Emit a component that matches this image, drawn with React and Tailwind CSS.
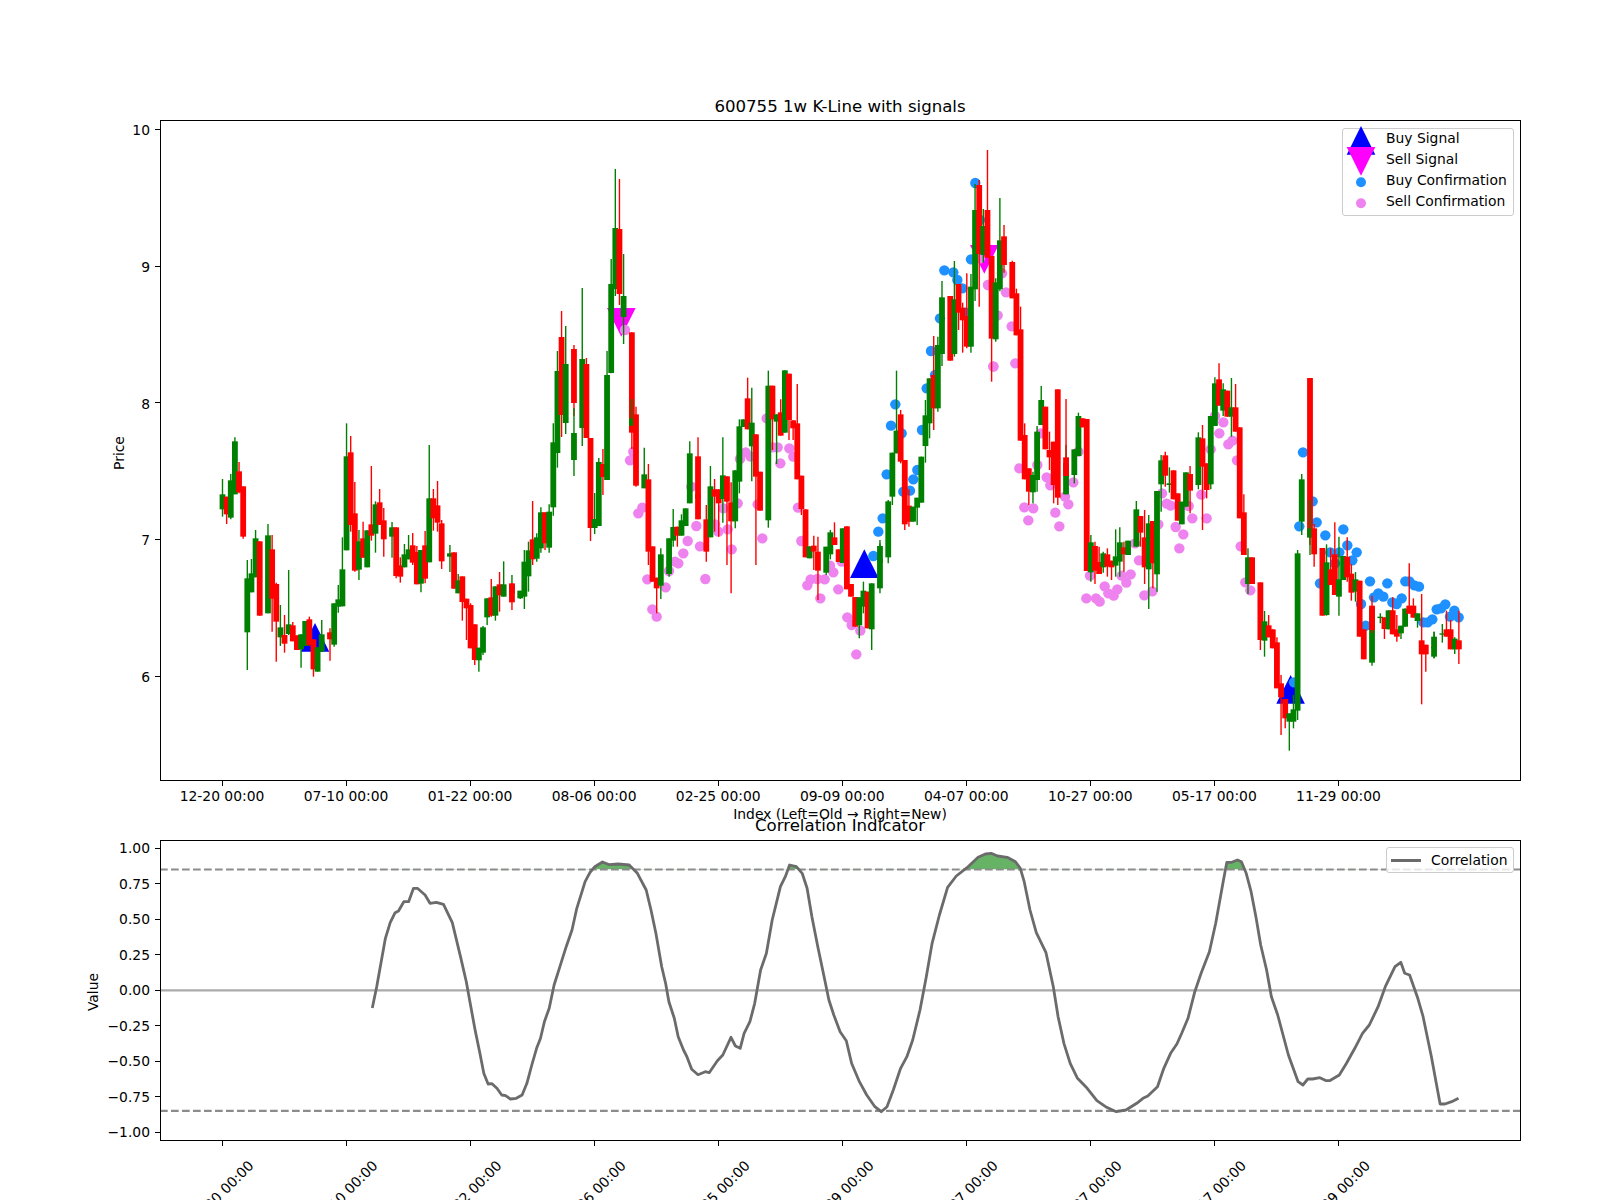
const X0 = 222.5
const STEP = 4.135
const snap = (x) => X0 + STEP * Math.round((x - X0) / STEP)

// candles read off the chart: [x, colour, bodyTop, bodyBottom, wickTop, wickBottom]
const readBlock = (ox, oy, sx, rows) =>
    rows.map(([x, c, t, b, wt, wb]) => [snap(ox + x / sx), c, oy + t / 3, oy + b / 3, oy + wt / 3, oy + wb / 3])

const CANDLES = [
    ...readBlock(200, 400, 3, [
        [65, 'g', 283, 328, 237, 350], [78, 'r', 290, 343, 290, 372], [92, 'g', 241, 353, 222, 358], [105, 'g', 124, 283, 112, 283],
        [120, 'r', 214, 277, 186, 280], [132, 'r', 259, 410, 259, 416], [144, 'g', 535, 697, 480, 810], [158, 'g', 520, 577, 477, 577],
        [171, 'g', 415, 532, 390, 532], [184, 'r', 424, 647, 424, 647], [198, 'g', 406, 640, 372, 640], [213, 'r', 448, 596, 405, 695],
        [225, 'r', 552, 665, 548, 785], [237, 'g', 682, 712, 615, 738], [252, 'r', 705, 731, 645, 758], [265, 'g', 673, 702, 510, 705],
        [278, 'r', 676, 724, 666, 724], [291, 'r', 706, 750, 706, 750], [306, 'g', 703, 748, 703, 803], [318, 'g', 663, 738, 663, 738],
        [330, 'r', 658, 735, 650, 738], [345, 'r', 718, 808, 718, 830], [357, 'g', 742, 815, 742, 815], [370, 'g', 703, 755, 660, 755],
        [384, 'r', 697, 718, 685, 782], [398, 'g', 610, 734, 610, 740], [410, 'g', 598, 620, 555, 638], [423, 'g', 508, 619, 412, 619],
        [438, 'g', 169, 451, 70, 451], [451, 'r', 157, 375, 108, 395], [465, 'r', 340, 512, 246, 515], [477, 'g', 424, 509, 390, 540],
        [490, 'r', 415, 473, 365, 473], [503, 'g', 391, 502, 391, 502], [516, 'r', 373, 407, 198, 422], [530, 'g', 313, 401, 304, 458],
        [542, 'r', 307, 375, 267, 375], [557, 'r', 361, 418, 324, 470], [570, 'g', 382, 410, 366, 473], [584, 'r', 382, 528, 382, 535],
        [597, 'r', 496, 530, 472, 548], [612, 'g', 463, 502, 432, 502], [622, 'g', 448, 478, 405, 478], [636, 'r', 436, 488, 399, 495],
        [650, 'r', 456, 553, 438, 553], [663, 'g', 450, 551, 450, 577], [677, 'r', 436, 536, 393, 550], [690, 'g', 295, 487, 135, 487],
        [704, 'r', 295, 355, 267, 392], [718, 'r', 316, 368, 243, 395], [730, 'r', 370, 484, 360, 507], [745, 'g', 460, 470, 435, 516],
        [756, 'r', 457, 566, 457, 566], [769, 'g', 541, 580, 522, 580], [782, 'r', 529, 606, 529, 662], [798, 'r', 596, 625, 596, 720],
        [808, 'r', 615, 745, 610, 745], [822, 'r', 673, 780, 673, 795], [837, 'g', 743, 781, 743, 815], [850, 'g', 682, 758, 678, 765],
        [863, 'g', 595, 652, 595, 675], [876, 'r', 592, 647, 537, 650], [890, 'g', 559, 647, 559, 662], [902, 'r', 553, 586, 516, 635],
        [916, 'g', 553, 590, 484, 590], [930, 'g', 553, 581, 525, 581], [942, 'r', 550, 607, 550, 630], [956, 'g', 572, 595, 572, 597],
        [970, 'g', 485, 590, 450, 627], [984, 'g', 451, 529, 425, 575], [995, 'r', 418, 478, 303, 495], [1008, 'g', 412, 476, 400, 485],
        [1022, 'g', 337, 445, 322, 458], [1034, 'r', 337, 430, 337, 450], [1050, 'g', 335, 443, 313, 458], [1063, 'g', 127, 322, 70, 347],
    ]),
    ...readBlock(0, 0, 1, [
        [558.7, 'g', 1113, 1359, 1053, 1403], [562.7, 'r', 1011, 1245, 933, 1311], [566.7, 'g', 1092, 1269, 978, 1302],
        [572, 'r', 1047, 1209, 1035, 1248], [576, 'g', 1299, 1380, 1224, 1428], [581, 'g', 1077, 1284, 864, 1338],
        [585, 'r', 1092, 1314, 1074, 1314], [589.8, 'r', 1314, 1584, 1314, 1623], [594.6, 'g', 1557, 1584, 1479, 1602],
        [598, 'g', 1386, 1578, 1374, 1578], [601.7, 'r', 1392, 1431, 1347, 1485], [606.7, 'g', 1125, 1440, 1053, 1440],
        [611.7, 'g', 852, 1119, 777, 1120], [615.7, 'g', 684, 867, 507, 888], [621, 'r', 687, 882, 537, 915], [625.3, 'g', 888, 951, 762, 1032],
    ]),
    ...readBlock(600, 280, 3, [
        [90, 'r', 157, 458, 157, 507], [100, 'g', 415, 437, 358, 437], [114, 'r', 403, 617, 380, 620], [128, 'g', 583, 625, 503, 625],
        [141, 'r', 598, 815, 552, 855], [155, 'r', 799, 905, 799, 905], [167, 'r', 893, 925, 893, 1000], [182, 'g', 823, 917, 805, 957],
        [207, 'g', 775, 882, 775, 890], [221, 'g', 741, 782, 687, 800], [233, 'r', 740, 767, 740, 800], [248, 'g', 721, 767, 703, 767],
        [260, 'g', 685, 738, 685, 738], [275, 'g', 520, 670, 484, 670], [288, 'r', 529, 655, 472, 655], [300, 'r', 643, 718, 643, 718],
        [314, 'r', 718, 815, 675, 845], [326, 'g', 619, 772, 558, 772], [341, 'r', 628, 650, 597, 755], [353, 'r', 628, 670, 628, 770],
        [367, 'g', 586, 657, 472, 728], [380, 'r', 589, 665, 589, 855], [393, 'r', 667, 724, 607, 940], [407, 'g', 571, 724, 571, 745],
        [420, 'g', 439, 605, 418, 640], [432, 'g', 418, 441, 418, 441], [445, 'r', 355, 448, 293, 448], [461, 'g', 428, 499, 323, 604],
        [473, 'r', 463, 590, 463, 855], [485, 'r', 575, 692, 575, 692], [500, 'g', 317, 721, 272, 743], [513, 'r', 317, 418, 317, 510],
        [526, 'g', 403, 425, 403, 552], [539, 'r', 397, 467, 358, 467], [555, 'g', 271, 458, 271, 458], [567, 'r', 281, 420, 281, 480],
        [580, 'r', 421, 445, 421, 480], [594, 'r', 430, 598, 312, 598], [606, 'r', 587, 687, 587, 705], [620, 'r', 688, 832, 688, 832],
        [632, 'g', 799, 835, 799, 835], [647, 'r', 797, 815, 767, 870], [660, 'r', 815, 872, 770, 960], [673, 'g', 800, 878, 800, 885],
        [686, 'g', 757, 823, 750, 838], [699, 'r', 772, 795, 727, 795], [712, 'r', 808, 846, 808, 846], [724, 'g', 745, 849, 745, 849],
        [741, 'r', 739, 928, 739, 928], [753, 'r', 912, 950, 912, 950], [767, 'r', 951, 1040, 951, 1040], [780, 'g', 952, 1036, 952, 1075],
        [792, 'g', 932, 980, 905, 1000], [805, 'r', 935, 1045, 935, 1045], [818, 'g', 910, 1048, 910, 1110], [834, 'g', 835, 925, 790, 940],
        [846, 'g', 798, 848, 780, 848], [860, 'g', 664, 832, 660, 850], [873, 'g', 518, 650, 518, 675], [884, 'g', 452, 520, 272, 520],
        [899, 'r', 403, 545, 390, 550], [913, 'r', 540, 733, 540, 750], [927, 'r', 677, 725, 628, 740], [938, 'g', 680, 725, 680, 725],
        [954, 'g', 653, 683, 653, 735], [966, 'g', 530, 668, 530, 668], [978, 'g', 406, 498, 360, 548], [993, 'g', 295, 430, 295, 475],
        [1004, 'r', 285, 385, 168, 450],
    ]),
    ...readBlock(900, 130, 3, [
        [119, 'g', 645, 835, 620, 845], [130, 'g', 502, 672, 453, 708], [145, 'r', 498, 692, 498, 692], [158, 'g', 508, 672, 393, 680],
        [170, 'r', 462, 548, 462, 600], [185, 'r', 533, 571, 518, 668], [197, 'r', 558, 650, 430, 655], [212, 'g', 470, 650, 432, 668],
        [225, 'g', 240, 478, 162, 513], [238, 'r', 165, 372, 150, 530], [250, 'g', 288, 375, 237, 398], [264, 'r', 240, 383, 60, 383],
        [278, 'r', 378, 626, 378, 755], [290, 'g', 457, 628, 445, 635], [305, 'g', 331, 478, 204, 484], [318, 'r', 319, 405, 285, 428],
        [333, 'r', 396, 505, 392, 505], [344, 'r', 490, 616, 476, 616], [357, 'r', 598, 932, 530, 932],
    ]),
    ...readBlock(1000, 130, 2.904, [
        [70, 'r', 915, 1048, 880, 1048], [80, 'r', 1015, 1085, 1015, 1125], [97, 'g', 1035, 1087, 1025, 1120], [107, 'g', 905, 1050, 888, 1085],
        [122, 'g', 810, 885, 768, 885], [133, 'r', 830, 958, 830, 958], [147, 'r', 960, 982, 905, 1020], [158, 'r', 935, 1065, 935, 1120],
        [171, 'r', 778, 1103, 778, 1125], [186, 'g', 1000, 1093, 945, 1093], [197, 'r', 982, 1038, 807, 1038], [212, 'g', 958, 1035, 958, 1060],
        [223, 'g', 858, 978, 848, 978], [238, 'r', 865, 892, 865, 892],
    ]),
    ...readBlock(1000, 400, 3, [
        [258, 'r', 57, 513, 57, 513], [270, 'g', 427, 517, 405, 545], [285, 'r', 438, 512, 425, 552], [298, 'r', 486, 522, 440, 522],
        [310, 'g', 460, 502, 455, 518], [324, 'r', 463, 500, 445, 530], [337, 'r', 482, 502, 482, 540], [350, 'g', 469, 497, 388, 530],
        [361, 'g', 427, 485, 382, 530], [377, 'r', 442, 463, 425, 515], [390, 'g', 422, 465, 422, 465], [404, 'g', 328, 440, 303, 440],
        [417, 'r', 348, 398, 348, 440], [430, 'r', 412, 502, 330, 552], [444, 'g', 370, 508, 345, 627], [456, 'r', 363, 490, 363, 565],
        [471, 'g', 273, 523, 273, 575], [481, 'g', 181, 253, 165, 335], [498, 'r', 166, 227, 155, 260], [511, 'g', 250, 255, 202, 278],
        [524, 'r', 211, 298, 211, 298], [537, 'r', 280, 362, 280, 362], [548, 'g', 305, 373, 305, 373], [564, 'g', 217, 320, 217, 320],
        [575, 'r', 222, 272, 198, 340],
    ]),
    ...readBlock(1000, 130, 2.904, [
        [573, 'g', 922, 1065, 907, 1078], [585, 'r', 925, 1010, 885, 1200], [597, 'r', 1000, 1080, 1000, 1105], [610, 'g', 858, 1063, 858, 1078],
        [621, 'g', 760, 888, 742, 888], [636, 'r', 748, 827, 700, 827], [648, 'g', 778, 842, 760, 858], [662, 'r', 782, 860, 782, 860],
        [675, 'g', 832, 860, 744, 920], [689, 'r', 832, 905, 762, 905], [700, 'r', 892, 1165, 892, 1165],
    ]),
    ...readBlock(1000, 400, 3, [
        [733, 'r', 337, 465, 283, 465], [748, 'g', 472, 552, 445, 582], [762, 'r', 472, 552, 472, 552], [777, 'r', 547, 720, 547, 750],
        [790, 'g', 664, 722, 633, 770], [804, 'r', 676, 712, 645, 712], [815, 'r', 688, 745, 688, 745], [827, 'r', 727, 865, 712, 865],
        [843, 'r', 850, 892, 825, 1005], [854, 'r', 897, 955, 897, 985], [871, 'g', 940, 965, 940, 1052], [884, 'g', 928, 965, 885, 985],
        [897, 'g', 460, 932, 450, 960], [908, 'g', 238, 365, 222, 405], [924, 'r', -66, 410, -66, 435], [934, 'g', 385, 413, 300, 465],
        [948, 'r', 385, 463, 372, 500], [962, 'r', 444, 647, 444, 647], [975, 'g', 487, 645, 433, 647], [988, 'r', 508, 555, 445, 555],
        [1001, 'r', 463, 585, 367, 585], [1017, 'g', 538, 590, 410, 647], [1028, 'g', 468, 540, 468, 540], [1041, 'r', 470, 532, 412, 545],
        [1056, 'r', 521, 578, 492, 602], [1068, 'g', 538, 575, 516, 605], [1082, 'r', 542, 710, 542, 710], [1095, 'r', 688, 778, 688, 778],
        [1110, 'g', 625, 788, 625, 797], [1122, 'r', 617, 690, 587, 698], [1135, 'g', 650, 654, 640, 670], [1148, 'r', 652, 687, 652, 717],
        [1160, 'g', 631, 688, 631, 688], [1175, 'r', 631, 703, 592, 703], [1188, 'r', 688, 710, 645, 725], [1203, 'g', 677, 700, 677, 717],
        [1214, 'g', 626, 680, 625, 680], [1228, 'r', 617, 641, 490, 641], [1243, 'r', 617, 653, 595, 653], [1255, 'g', 640, 663, 640, 683],
        [1270, 'r', 721, 763, 582, 913], [1283, 'r', 734, 763, 734, 815], [1296, 'g', 740, 770, 695, 775], [1308, 'g', 710, 745, 695, 775],
        [1321, 'g', 700, 704, 672, 728], [1335, 'r', 688, 710, 632, 710], [1348, 'r', 688, 748, 660, 748], [1362, 'g', 716, 748, 712, 762],
        [1375, 'r', 721, 748, 632, 792],
    ]),
]

const readDots = (ox, oy, sx, pts) => pts.map(([x, y]) => [ox + x / sx, oy + y / 3])

const SELL_DOTS = [
    ...readDots(600, 280, 3, [
        [75, 150], [100, 515], [90, 541], [127, 683], [115, 700], [263, 783], [289, 738], [300, 799], [250, 820], [225, 845], [235, 850], [207, 873],
        [142, 898], [197, 922], [157, 988], [170, 1010], [316, 897], [345, 733], [355, 755], [383, 748], [395, 808], [370, 685], [413, 670], [274, 620],
        [420, 537], [437, 517], [452, 530], [473, 673], [487, 775], [500, 415], [518, 502], [533, 502], [541, 550], [568, 505], [580, 530], [594, 683],
        [604, 783], [690, 857], [700, 877], [632, 898], [622, 916], [652, 897], [674, 898], [661, 955], [715, 928], [725, 845], [742, 1012], [755, 1035],
        [781, 1052], [769, 1123], [1165, 15], [1180, 260],
    ]),
    ...readDots(900, 130, 3, [[264, 465], [318, 487], [306, 430], [293, 556], [335, 589], [280, 709], [346, 700], [240, 385]]),
    ...readDots(1000, 400, 3, [
        [58, 205], [112, 195], [122, 100], [140, 232], [151, 256], [73, 322], [100, 325], [85, 361], [166, 338], [178, 379], [195, 290], [205, 313],
        [220, 247], [235, 155], [270, 527], [259, 595], [288, 595], [299, 605], [314, 559], [325, 580], [341, 587], [352, 568], [379, 548], [365, 527],
        [392, 523], [405, 430], [417, 481], [433, 586], [457, 574], [475, 373], [486, 280], [500, 311], [512, 317], [527, 381], [550, 403], [538, 445],
        [577, 355], [620, 355], [604, 284], [566, 318], [632, 148], [645, 48], [670, 67], [658, 100], [685, 133], [697, 122], [711, 181], [722, 439],
        [736, 547], [751, 571],
    ]),
]

const BUY_DOTS = [
    ...readDots(600, 280, 3, [
        [820, 828], [835, 755], [848, 715], [860, 583], [873, 437], [886, 373], [905, 460], [910, 635], [930, 632], [940, 598], [952, 570], [966, 450],
        [980, 325], [1005, 285], [993, 213], [1020, 115],
    ]),
    ...readDots(900, 130, 3, [[133, 421], [160, 427], [172, 450], [187, 475], [197, 548], [213, 388], [226, 159], [240, 270]]),
    ...readDots(1000, 400, 3, [
        [882, 847], [909, 157], [938, 304], [898, 379], [950, 367], [976, 406], [1030, 388], [1042, 436], [1070, 457], [991, 457], [1018, 457], [1005, 490],
        [1057, 481], [960, 550], [1110, 544], [1162, 550], [1216, 544], [1228, 544], [1243, 556], [1257, 560], [1135, 580], [1122, 592], [1150, 590],
        [1177, 607], [1190, 612], [1205, 595], [1083, 612], [1097, 677], [1270, 667], [1283, 667], [1297, 658], [1310, 628], [1323, 625], [1336, 613],
        [1350, 650], [1363, 632], [1376, 652],
    ]),
]

const BUY_SIGNALS = [[315, 623], [864.3, 549.3], [1290.6, 675]]
const SELL_SIGNALS = [[621.3, 308], [984.3, 245]]

const corrLeft = [
    [603, 714], [612, 650], [622, 570], [630, 505], [640, 458], [650, 428], [657, 423], [668, 395], [678, 395], [688, 355], [696, 355], [712, 375], [722, 400],
    [735, 397], [750, 403], [768, 458], [785, 560], [797, 635], [805, 700], [815, 780], [825, 850], [833, 910], [842, 942], [850, 941], [860, 955], [870, 975],
    [878, 977], [888, 987], [900, 985], [912, 975], [922, 940], [932, 885], [942, 835], [950, 805], [958, 755], [968, 715], [978, 645], [990, 590], [1003, 530],
    [1015, 480], [1025, 415], [1042, 335], [1052, 308], [1062, 290], [1078, 276], [1092, 284], [1110, 282], [1133, 285], [1150, 310], [1168, 360], [1178, 420],
    [1188, 490], [1200, 590], [1208, 640], [1215, 695], [1226, 745], [1234, 800], [1245, 840], [1252, 860], [1262, 898], [1275, 914], [1290, 905], [1298, 908],
    [1315, 872], [1326, 855], [1343, 802], [1352, 828], [1362, 835], [1370, 790], [1382, 755], [1392, 700], [1404, 600], [1416, 550], [1428, 450], [1445, 350],
    [1455, 320], [1464, 285], [1478, 290], [1490, 310], [1500, 355], [1510, 440], [1522, 530], [1535, 620], [1545, 690], [1555, 735], [1568, 785],
]

const corrRight = [
    [13, 812], [24, 880], [40, 935], [55, 975], [72, 1010], [85, 1025], [97, 1010], [110, 960], [125, 895], [138, 860], [150, 810], [165, 720], [178, 620],
    [190, 520], [205, 435], [222, 352], [240, 318], [262, 293], [285, 262], [300, 252], [312, 250], [325, 258], [345, 262], [362, 275], [372, 295], [380, 335],
    [392, 420], [405, 488], [425, 548], [440, 650], [450, 740], [462, 820], [475, 880], [490, 925], [510, 955], [530, 992], [550, 1012], [570, 1025], [590, 1020],
    [612, 1000], [625, 985], [635, 978], [655, 950], [668, 895], [682, 850], [695, 822], [705, 790], [718, 745], [732, 665], [745, 610], [762, 545], [775, 460],
    [790, 340], [798, 277], [808, 277], [820, 270], [828, 275], [838, 310], [848, 365], [858, 440], [868, 525], [880, 600], [890, 680], [903, 735], [925, 855],
    [945, 935], [955, 945], [965, 927], [975, 927], [990, 923], [1003, 932], [1010, 932], [1030, 915], [1045, 880], [1062, 835], [1078, 790], [1092, 765],
    [1110, 710], [1125, 650], [1145, 590], [1157, 577], [1165, 610], [1175, 615], [1192, 685], [1203, 740], [1220, 860], [1238, 1002], [1248, 1002], [1262, 995],
    [1276, 985],
]

const CORR_POINTS = [
    ...corrLeft.map(([x, y]) => [80 + x / 2.063, 770 + y / 3]),
    ...corrRight.map(([x, y]) => [840 + x / 2.063, 770 + y / 3]),
]
const corrLine = CORR_POINTS.map(([x, y]) => `${x.toFixed(1)},${y.toFixed(1)}`).join(' ')
const corrFill = `${CORR_POINTS[0][0].toFixed(1)},869.5 ${corrLine} ${CORR_POINTS[CORR_POINTS.length - 1][0].toFixed(1)},869.5`

const TICK_LABELS = ['12-20 00:00', '07-10 00:00', '01-22 00:00', '08-06 00:00', '02-25 00:00', '09-09 00:00', '04-07 00:00', '10-27 00:00', '05-17 00:00', '11-29 00:00']
const tickX = (i) => X0 + i * 30 * STEP

const PRICE_TICKS = [[10, 129.3], [9, 266], [8, 402.7], [7, 539.4], [6, 676.1]]
const CORR_TICKS = ['1.00', '0.75', '0.50', '0.25', '0.00', '−0.25', '−0.50', '−0.75', '−1.00']

function YTick({ y, label, shift = 5 }) {
    return (
        <g>
            <line x1="155" x2="160" y1={y} y2={y} stroke="#000" strokeWidth="1" shapeRendering="crispEdges" />
            <text x="150" y={y + shift} textAnchor="end" className="text-[13.89px]">{label}</text>
        </g>
    )
}

function Candle({ x, color, top, bottom, wickTop, wickBottom }) {
    const fill = color === 'g' ? '#008000' : '#ff0000'
    return (
        <g>
            <line x1={x} x2={x} y1={wickTop} y2={wickBottom} stroke={fill} strokeWidth="1.4" />
            <rect x={x - 2.9} y={top} width="5.8" height={bottom - top} fill={fill} />
        </g>
    )
}

function PriceChart() {
    return (
        <svg viewBox="0 120 1600 686" className="block w-[1600px] h-[686px] overflow-visible">
            {BUY_SIGNALS.map(([x, y]) => (
                <polygon key={x} points={`${x},${y} ${x + 14.3},${y + 28.7} ${x - 14.3},${y + 28.7}`} fill="#0000ff" />
            ))}
            {SELL_SIGNALS.map(([x, y]) => (
                <polygon key={x} points={`${x - 14.3},${y} ${x + 14.3},${y} ${x},${y + 28.7}`} fill="#ff00ff" />
            ))}
            {SELL_DOTS.map(([x, y], i) => <circle key={i} cx={x} cy={y} r="5.2" fill="#ee82ee" />)}
            {BUY_DOTS.map(([x, y], i) => <circle key={i} cx={x} cy={y} r="5.2" fill="#1e90ff" />)}
            {CANDLES.map(([x, c, t, b, wt, wb], i) => (
                <Candle key={i} x={x} color={c} top={t} bottom={b} wickTop={wt} wickBottom={wb} />
            ))}
            <rect x="160.5" y="120.5" width="1360" height="660" fill="none" stroke="#000" strokeWidth="1" shapeRendering="crispEdges" />
            {PRICE_TICKS.map(([v, y]) => <YTick key={v} y={y} label={v} shift={6} />)}
            {TICK_LABELS.map((label, i) => (
                <g key={label}>
                    <line x1={tickX(i)} x2={tickX(i)} y1="780" y2="785.5" stroke="#000" strokeWidth="1" shapeRendering="crispEdges" />
                    <text x={tickX(i) - 0.5} y="801" textAnchor="middle" className="text-[13.89px]">{label}</text>
                </g>
            ))}
            <text x="124" y="453" textAnchor="middle" transform="rotate(-90 124 453)" className="text-[13.89px]">Price</text>
        </svg>
    )
}

function CorrelationChart() {
    return (
        <svg viewBox="0 840 1600 360" className="block w-[1600px] h-[360px] overflow-hidden">
            <clipPath id="above-threshold">
                <rect x="160" y="840" width="1360" height="29.5" />
            </clipPath>
            <polygon points={corrFill} fill="#008000" fillOpacity="0.6" clipPath="url(#above-threshold)" />
            <line x1="160" x2="1520" y1="990.3" y2="990.3" stroke="#aaaaaa" strokeWidth="2.2" />
            <line x1="160" x2="1520" y1="869.5" y2="869.5" stroke="#8c8c8c" strokeWidth="2.2" strokeDasharray="7.7 3.3" />
            <line x1="160" x2="1520" y1="1110.8" y2="1110.8" stroke="#8c8c8c" strokeWidth="2.2" strokeDasharray="7.7 3.3" />
            <polyline points={corrLine} fill="none" stroke="#6b6b6b" strokeWidth="2.8" strokeLinejoin="round" />
            <rect x="160.5" y="840.5" width="1360" height="300" fill="none" stroke="#000" strokeWidth="1" shapeRendering="crispEdges" />
            {CORR_TICKS.map((label, i) => <YTick key={label} y={848 + i * 35.5} label={label} />)}
            {TICK_LABELS.map((label, i) => (
                <g key={label}>
                    <line x1={tickX(i)} x2={tickX(i)} y1="1140" y2="1145.5" stroke="#000" strokeWidth="1" shapeRendering="crispEdges" />
                    <text
                        x={tickX(i) - 1.5}
                        y="1198"
                        textAnchor="middle"
                        transform={`rotate(-45 ${tickX(i) - 1.5} 1193)`}
                        className="text-[13.89px]"
                    >
                        {label}
                    </text>
                </g>
            ))}
            <text x="98" y="992" textAnchor="middle" transform="rotate(-90 98 992)" className="text-[13.89px]">Value</text>
        </svg>
    )
}

function Marker({ children }) {
    return (
        <svg viewBox="0 0 30 21" className="w-[30px] h-[21px] shrink-0 overflow-visible">
            {children}
        </svg>
    )
}

function PriceLegend() {
    const rows = [
        ['Buy Signal', <polygon points="15,-1 29.3,27.7 0.7,27.7" fill="#0000ff" />],
        ['Sell Signal', <polygon points="0.7,-1 29.3,-1 15,27.7" fill="#ff00ff" />],
        ['Buy Confirmation', <circle cx="15" cy="13.3" r="5" fill="#1e90ff" />],
        ['Sell Confirmation', <circle cx="15" cy="13.3" r="5" fill="#ee82ee" />],
    ]
    return (
        <div className="absolute left-[1342px] top-[8px] w-[172px] h-[88px] rounded-[3px] border border-[#cccccc] bg-white/80 pl-[3px]">
            <div className="-mt-[2px]">
                {rows.map(([label, marker]) => (
                    <div key={label} className="flex h-[21px] items-center gap-[10px] text-[13.89px] leading-[16px]">
                        <Marker>{marker}</Marker>
                        <span>{label}</span>
                    </div>
                ))}
            </div>
        </div>
    )
}

function CorrelationLegend() {
    return (
        <div className="absolute left-[1386px] top-[7px] flex h-[26px] w-[128px] items-center rounded-[3px] border border-[#cccccc] bg-white/80 pl-[4px] text-[13.89px] leading-[16px]">
            <span className="h-[3px] w-[30px] shrink-0 bg-[#6b6b6b]" />
            <span className="ml-[10px]">Correlation</span>
        </div>
    )
}

export default function App() {
    return (
        <div className="flex h-[1200px] w-[1600px] flex-col overflow-hidden bg-white pt-[97px] font-['DejaVu_Sans',sans-serif] text-black">
            <h2 className="mb-[3px] h-[20px] pl-[160px] pr-[80px] text-center text-[16.6px] leading-[20px] font-normal">
                600755 1w K-Line with signals
            </h2>
            <section className="relative">
                <PriceChart />
                <PriceLegend />
            </section>
            <p className="h-[16px] pl-[160px] pr-[80px] text-center text-[13.89px] leading-[16px]">
                Index (Left=Old → Right=New)
            </p>
            <h2 className="-mt-[6px] mb-[4px] h-[20px] pl-[160px] pr-[80px] text-center text-[16.6px] leading-[20px] font-normal">
                Correlation Indicator
            </h2>
            <section className="relative">
                <CorrelationChart />
                <CorrelationLegend />
            </section>
        </div>
    )
}
